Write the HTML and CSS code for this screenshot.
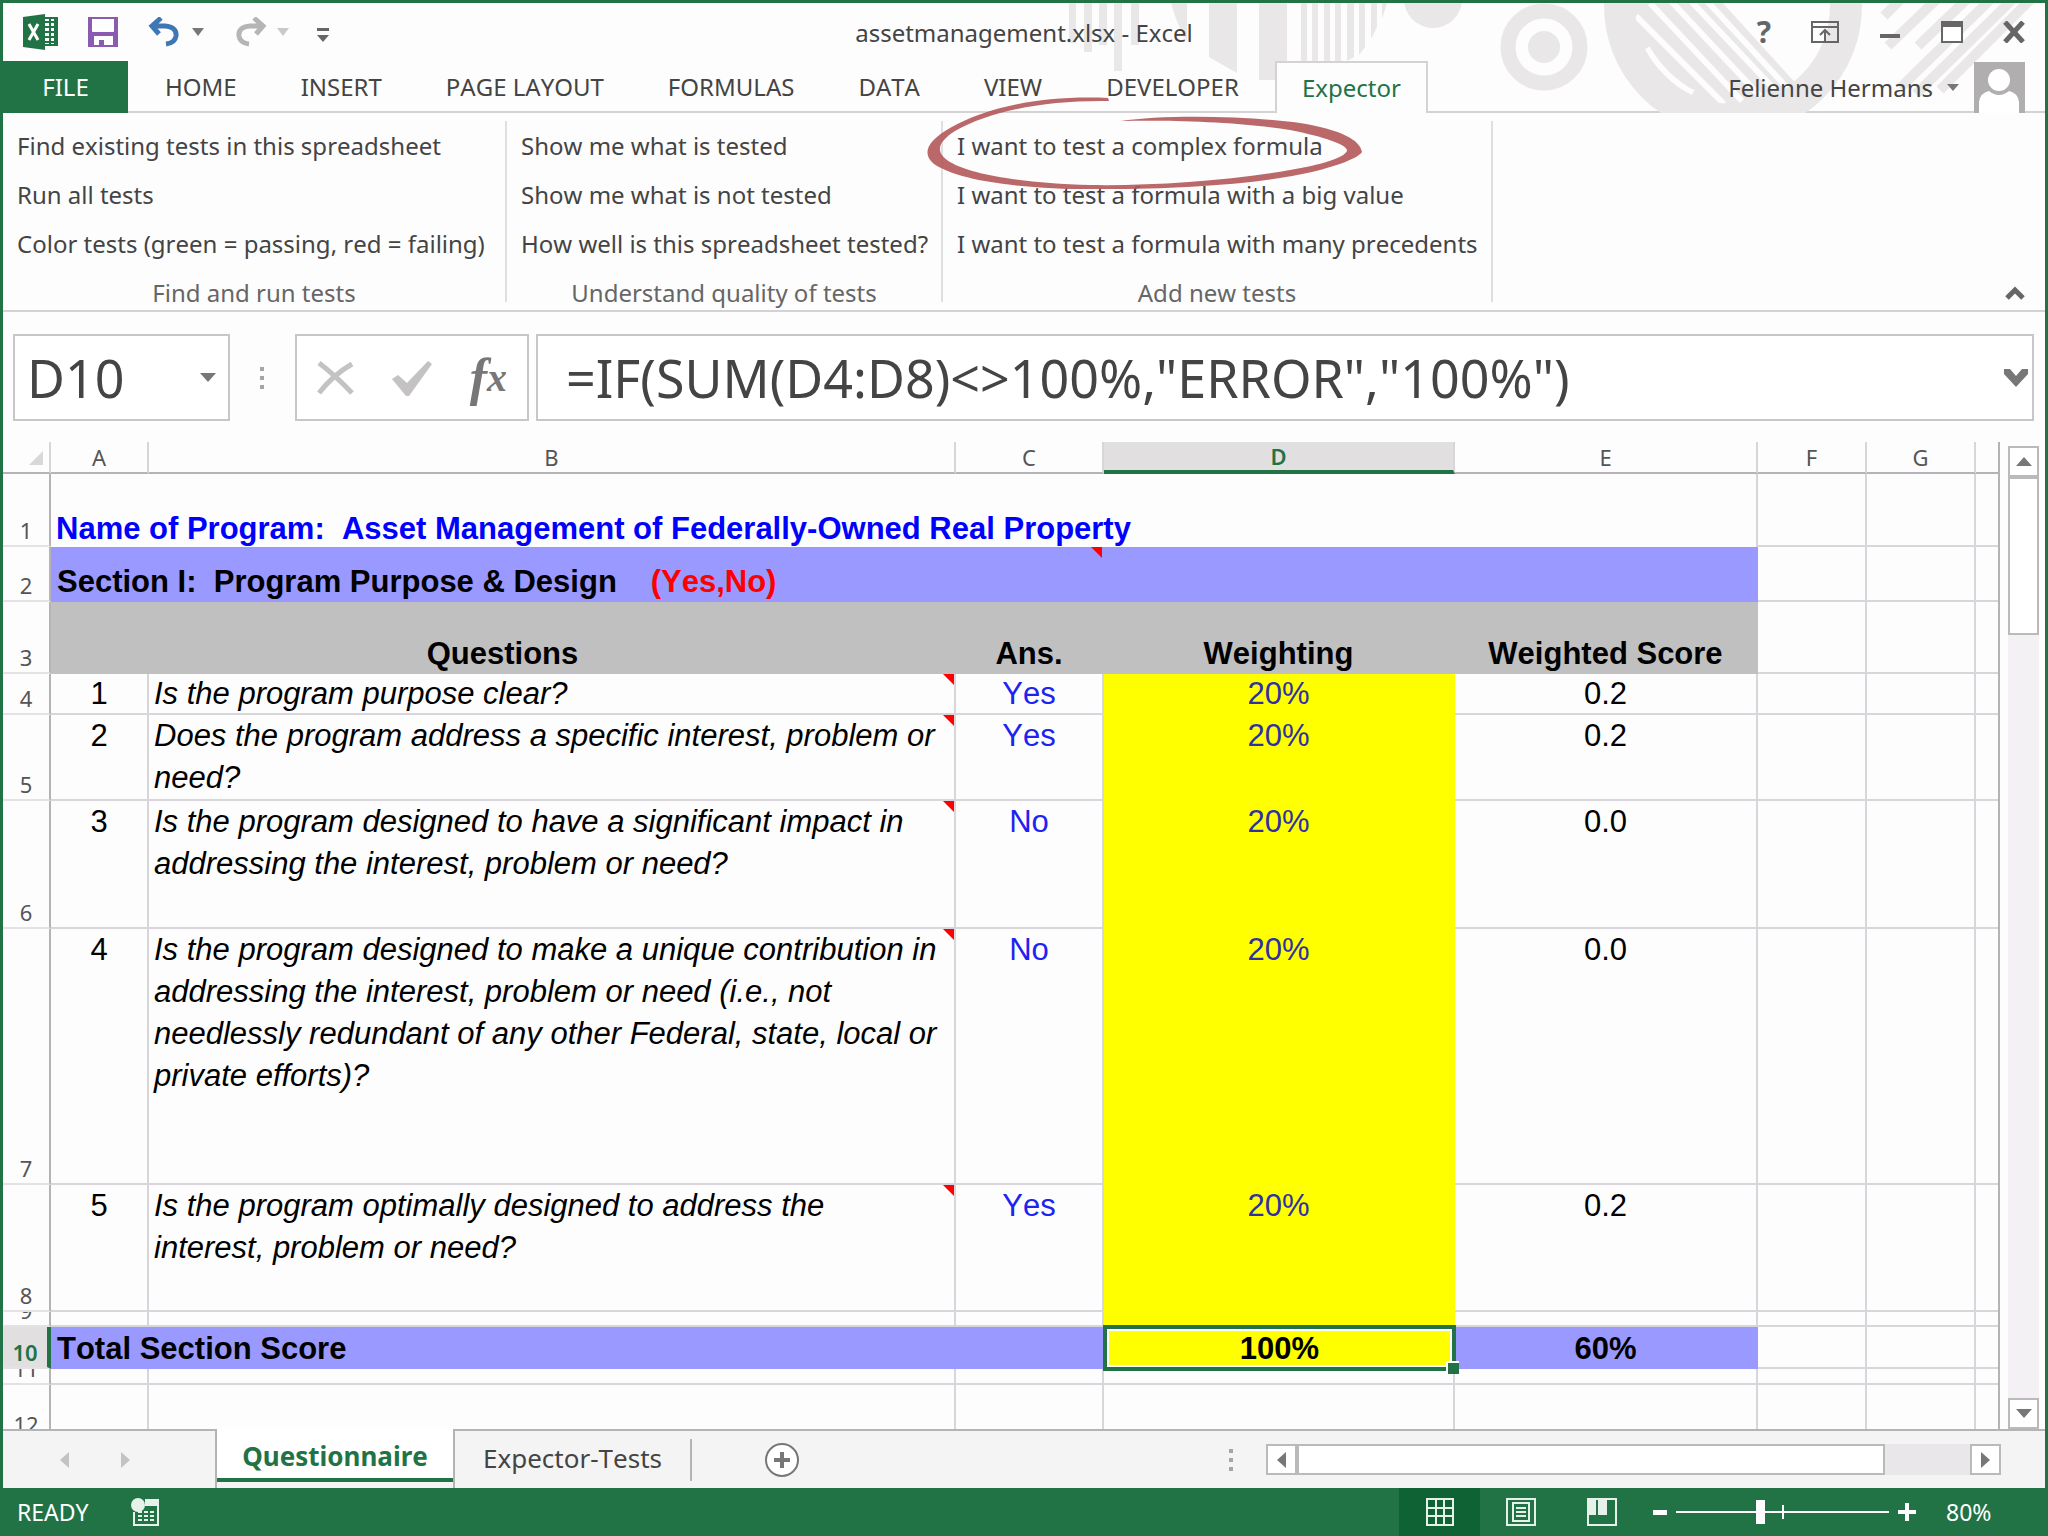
FILE: index.html
```html
<!DOCTYPE html>
<html lang="en">
<head>
    <meta charset="UTF-8">
    <meta name="viewport" content="width=device-width, initial-scale=1.0">
    <title>assetmanagement.xlsx - Excel</title>
    <link rel="stylesheet" href="styles.css">
</head>
<body>

    <div class="window">
        <header class="top">
            <svg class="pattern" width="980" height="110" viewBox="1065 3 980 110" aria-hidden="true">
                <g fill="#e9e7e8">
                    <path d="M1069 3h7v40h-7zM1084 3h8v49h-8zM1099 3h8v42h-8zM1114 3h8v68h-8zM1131 3h8v42h-8z"/>
                    <path d="M1171 3h16v38q-10-16-16-38zM1209 3h28v70l-28-16zM1259 3h28v77h-28z"/>
                    <path d="M1301 3h6v58h-6zM1312 3h6v58h-6zM1324 3h6v58h-6zM1335 3h6v58h-6zM1347 3h7v54l-7 4zM1359 3h6v44l-6 8zM1371 3h6v24l-6 12zM1382 3h5l-5 16z"/>
                    <circle cx="1433" cy="-1" r="29"/>
                    <circle cx="1544" cy="47" r="16"/>
                </g>
                <g fill="none" stroke="#e9e7e8">
                    <circle cx="1544" cy="47" r="36" stroke-width="15"/>
                    <circle cx="1733" cy="6" r="113" stroke-width="32"/>
                </g>
                <clipPath id="disc"><circle cx="1733" cy="6" r="98"/></clipPath>
                <g clip-path="url(#disc)">
                    <path d="M1600 0h120l100 110h-220z" fill="#e9e7e8"/>
                    <path d="M1647 48q18 30 46 45M1636 16l88 88M1650 3l92 98M1670 0l90 96M1690 0l85 90M1706 0l85 92" fill="none" stroke="#fdfdfd" stroke-width="6"/>
                </g>
                <g stroke="#e9e7e8" stroke-width="10">
                    <path d="M1884 16l18-18M1888 46l50-48M1918 46l50-48M1900 88l94-92M1916 94l100-98M1940 90l94-94"/>
                </g>
            </svg>

            <div class="title-bar">
                <div class="quick-access">
                    <svg width="36" height="36" viewBox="0 0 36 36" aria-hidden="true">
                        <path d="M20 4h14v27H20z" fill="#fff" stroke="#217346" stroke-width="2"/>
                        <path d="M22 8h10M22 13h10M22 18h10M22 23h10M22 28h10M27 5v25M32 5v25" stroke="#217346" stroke-width="2"/>
                        <path d="M0 3l22-3v36L0 33z" fill="#217346"/>
                        <path d="M6 10l9 16M15 10L6 26" stroke="#fff" stroke-width="3"/>
                    </svg>
                    <button class="icon-btn save" aria-label="Save">
                        <svg width="30" height="30" viewBox="0 0 30 30">
                            <path d="M0 0h30v30H0z" fill="#8a5bb0"/>
                            <path d="M4 2h22v12q0 1-1 1H5q-1 0-1-1zM6 19h19v9h-9v-5h-5v5H6z" fill="#fff"/>
                        </svg>
                    </button>
                    <button class="icon-btn undo" aria-label="Undo">
                        <svg width="32" height="30" viewBox="0 0 32 30">
                            <path d="M4 9h13q12 1 11 10q-1 7-10 8M13 1L4 9l7 8" fill="none" stroke="#3f77b5" stroke-width="5"/>
                        </svg>
                    </button>
                    <button class="icon-btn" aria-label="Undo list">
                        <svg width="12" height="8" viewBox="0 0 12 8"><path d="M0 0h12L6 8z" fill="#777"/></svg>
                    </button>
                    <button class="icon-btn redo" aria-label="Redo">
                        <svg width="32" height="30" viewBox="0 0 32 30">
                            <path d="M28 9H15Q3 10 4 19q1 7 10 8M19 1l9 8l-7 8" fill="none" stroke="#b5b5b5" stroke-width="5"/>
                        </svg>
                    </button>
                    <button class="icon-btn" aria-label="Redo list">
                        <svg width="12" height="8" viewBox="0 0 12 8"><path d="M0 0h12L6 8z" fill="#c9c9c9"/></svg>
                    </button>
                    <button class="icon-btn customize" aria-label="Customize toolbar">
                        <svg width="12" height="14" viewBox="0 0 12 14"><path d="M0 0h12v3H0zM0 7h12l-6 7z" fill="#666"/></svg>
                    </button>
                </div>
                <h1 class="title">assetmanagement.xlsx - Excel</h1>
                <div class="window-buttons">
                    <button class="icon-btn help" aria-label="Help">?</button>
                    <button class="icon-btn" aria-label="Ribbon display options">
                        <svg width="28" height="22" viewBox="0 0 28 22"><path d="M1 1h26v20H1zM1 6h26M14 20V9M9 14l5-5l5 5" fill="none" stroke="#666" stroke-width="2"/></svg>
                    </button>
                    <button class="icon-btn" aria-label="Minimize">
                        <svg width="22" height="22" viewBox="0 0 22 22"><path d="M1 13h20v4H1z" fill="#666"/></svg>
                    </button>
                    <button class="icon-btn" aria-label="Maximize">
                        <svg width="22" height="22" viewBox="0 0 22 22"><path d="M1 1h20v20H1z" fill="#fff" stroke="#666" stroke-width="2"/><path d="M0 0h22v6H0z" fill="#666"/></svg>
                    </button>
                    <button class="icon-btn" aria-label="Close">
                        <svg width="22" height="22" viewBox="0 0 22 22"><path d="M2 1l18 20M20 1L2 21" stroke="#666" stroke-width="5"/></svg>
                    </button>
                </div>
            </div>

            <nav class="tabs">
                <button class="tab tab-file">FILE</button>
                <button class="tab">HOME</button>
                <button class="tab">INSERT</button>
                <button class="tab">PAGE LAYOUT</button>
                <button class="tab">FORMULAS</button>
                <button class="tab">DATA</button>
                <button class="tab">VIEW</button>
                <button class="tab">DEVELOPER</button>
                <button class="tab active">Expector</button>
                <button class="user">
                    <span>Felienne Hermans</span>
                    <svg class="user-caret" width="12" height="7" viewBox="0 0 12 7"><path d="M0 0h12L6 7z" fill="#777"/></svg>
                    <svg width="51" height="51" viewBox="0 0 51 51">
                        <path d="M0 0h51v51H0z" fill="#b0aeaf"/>
                        <circle cx="25" cy="18" r="11" fill="#fff"/>
                        <path d="M5 51V40q1-9 10-11q10 8 20 0q9 2 10 11v11z" fill="#fff"/>
                    </svg>
                </button>
            </nav>
        </header>

        <section class="ribbon">
            <div class="group">
                <button class="command">Find existing tests in this spreadsheet</button>
                <button class="command">Run all tests</button>
                <button class="command">Color tests (green = passing, red = failing)</button>
                <div class="group-label">Find and run tests</div>
            </div>
            <div class="group">
                <button class="command">Show me what is tested</button>
                <button class="command">Show me what is not tested</button>
                <button class="command">How well is this spreadsheet tested?</button>
                <div class="group-label">Understand quality of tests</div>
            </div>
            <div class="group">
                <button class="command marked">I want to test a complex formula
                    <svg class="marker" width="440" height="94" viewBox="925 96 440 94" aria-hidden="true">
                        <path fill="#b4585a" fill-opacity=".9" d="M1108 98C1040 95 985 108 950 128C926 142 922 154 934 164C960 182 1030 190 1105 189C1180 189 1260 184 1312 172C1340 165 1358 158 1362 152C1360 140 1342 130 1300 123C1240 115 1160 115 1121 121C1160 120 1235 121 1290 130C1325 137 1348 145 1347 151C1344 158 1320 165 1290 170C1230 181 1150 186 1090 185C1020 183 970 174 950 162C934 152 938 142 955 131C990 111 1045 100 1109 101Z"/>
                    </svg>
                </button>
                <button class="command">I want to test a formula with a big value</button>
                <button class="command">I want to test a formula with many precedents</button>
                <div class="group-label">Add new tests</div>
            </div>
            <button class="icon-btn collapse" aria-label="Collapse the ribbon">
                <svg width="20" height="14" viewBox="0 0 20 14"><path d="M2 12l8-8l8 8" fill="none" stroke="#666" stroke-width="5"/></svg>
            </button>
        </section>

        <section class="formula-bar">
            <div class="box name-box">
                <input type="text" value="D10" aria-label="Name box">
                <svg width="16" height="9" viewBox="0 0 16 9"><path d="M0 0h16L8 9z" fill="#777"/></svg>
            </div>
            <svg class="grip" width="4" height="22" viewBox="0 0 4 22"><path d="M0 0h4v4H0zM0 9h4v4H0zM0 18h4v4H0z" fill="#a5a5a5"/></svg>
            <div class="box formula-buttons">
                <button class="icon-btn" aria-label="Cancel">
                    <svg width="38" height="36" viewBox="0 0 38 36"><path d="M2 3q16 12 33 30M35 4Q16 15 2 33" fill="none" stroke="#c4c2c3" stroke-width="5"/></svg>
                </button>
                <button class="icon-btn" aria-label="Enter">
                    <svg width="40" height="36" viewBox="0 0 40 36"><path d="M0 19l6-4l9 8L36 1l4 3L17 36h-3z" fill="#c4c2c3"/></svg>
                </button>
                <button class="icon-btn fx" aria-label="Insert function">f<span>x</span></button>
            </div>
            <div class="box formula">
                <input type="text" value='=IF(SUM(D4:D8)&lt;&gt;100%,"ERROR","100%")' aria-label="Formula">
                <svg width="24" height="18" viewBox="0 0 24 18"><path d="M0 0h6l6 7l6-7h6v5L12 18L0 5z" fill="#777"/></svg>
            </div>
        </section>

        <main class="workspace">
            <div class="sheet">
                <table>
                    <colgroup>
                        <col class="c-head"><col class="c-a"><col class="c-b"><col class="c-c"><col class="c-d"><col class="c-e"><col class="c-f"><col class="c-f"><col>
                    </colgroup>
                    <thead>
                        <tr>
                            <th class="corner"><svg width="14" height="14" viewBox="0 0 14 14"><path d="M14 0v14H0z" fill="#d9d7d8"/></svg></th>
                            <th>A</th><th>B</th><th>C</th><th class="current">D</th><th>E</th><th>F</th><th>G</th><th></th>
                        </tr>
                    </thead>
                    <tbody>
                        <tr class="r1">
                            <th>1</th>
                            <td colspan="5" class="program">Name of Program:&nbsp; Asset Management of Federally-Owned Real Property</td>
                            <td></td><td></td><td></td>
                        </tr>
                        <tr class="r2 band">
                            <th>2</th>
                            <td colspan="3" class="fill note">Section I:&nbsp; Program Purpose &amp; Design&nbsp;&nbsp; <span class="hint">(Yes,No)</span></td>
                            <td class="fill"></td><td class="fill"></td>
                            <td></td><td></td><td></td>
                        </tr>
                        <tr class="r3 heading">
                            <th>3</th>
                            <td colspan="2" class="fill">Questions</td><td class="fill">Ans.</td><td class="fill">Weighting</td><td class="fill">Weighted Score</td>
                            <td></td><td></td><td></td>
                        </tr>
                        <tr class="r4 item">
                            <th>4</th>
                            <td>1</td><td class="question note">Is the program purpose clear?</td><td class="answer">Yes</td><td class="weight">20%</td><td>0.2</td>
                            <td></td><td></td><td></td>
                        </tr>
                        <tr class="r5 item">
                            <th>5</th>
                            <td>2</td><td class="question note">Does the program address a specific interest, problem or need?</td><td class="answer">Yes</td><td class="weight">20%</td><td>0.2</td>
                            <td></td><td></td><td></td>
                        </tr>
                        <tr class="r6 item">
                            <th>6</th>
                            <td>3</td><td class="question note">Is the program designed to have a significant impact in addressing the interest, problem or need?</td><td class="answer">No</td><td class="weight">20%</td><td>0.0</td>
                            <td></td><td></td><td></td>
                        </tr>
                        <tr class="r7 item">
                            <th>7</th>
                            <td>4</td><td class="question note">Is the program designed to make a unique contribution in addressing the interest, problem or need (i.e., not needlessly redundant of any other Federal, state, local or private efforts)?</td><td class="answer">No</td><td class="weight">20%</td><td>0.0</td>
                            <td></td><td></td><td></td>
                        </tr>
                        <tr class="r8 item">
                            <th>8</th>
                            <td>5</td><td class="question note">Is the program optimally designed to address the<br>interest, problem or need?</td><td class="answer">Yes</td><td class="weight">20%</td><td>0.2</td>
                            <td></td><td></td><td></td>
                        </tr>
                        <tr class="r9 thin">
                            <th><div>9</div></th>
                            <td></td><td></td><td></td><td class="weight"></td><td></td>
                            <td></td><td></td><td></td>
                        </tr>
                        <tr class="r10 band">
                            <th class="current">10</th>
                            <td colspan="3" class="fill">Total Section Score</td>
                            <td class="selected"><div class="cursor">100%<span class="handle"></span></div></td>
                            <td class="fill total">60%</td>
                            <td></td><td></td><td></td>
                        </tr>
                        <tr class="r11 thin">
                            <th><div>11</div></th>
                            <td></td><td></td><td></td><td></td><td></td>
                            <td></td><td></td><td></td>
                        </tr>
                        <tr class="r12">
                            <th>12</th>
                            <td></td><td></td><td></td><td></td><td></td>
                            <td></td><td></td><td></td>
                        </tr>
                    </tbody>
                </table>
            </div>
            <div class="scroll-y">
                <button class="scroll-btn" aria-label="Scroll up"><svg width="16" height="9" viewBox="0 0 16 9"><path d="M0 9h16L8 0z" fill="#777"/></svg></button>
                <div class="thumb"></div>
                <button class="scroll-btn" aria-label="Scroll down"><svg width="16" height="9" viewBox="0 0 16 9"><path d="M0 0h16L8 9z" fill="#777"/></svg></button>
            </div>
        </main>

        <section class="sheet-bar">
            <div class="sheet-nav">
                <button class="icon-btn" aria-label="Previous sheet"><svg width="9" height="16" viewBox="0 0 9 16"><path d="M9 0v16L0 8z" fill="#c4c2c3"/></svg></button>
                <button class="icon-btn" aria-label="Next sheet"><svg width="9" height="16" viewBox="0 0 9 16"><path d="M0 0v16l9-8z" fill="#c4c2c3"/></svg></button>
            </div>
            <button class="sheet-tab active">Questionnaire</button>
            <div class="sheet-rest">
                <button class="sheet-tab">Expector-Tests</button>
                <button class="icon-btn new-sheet" aria-label="New sheet">
                    <svg width="36" height="36" viewBox="0 0 36 36"><circle cx="18" cy="18" r="16" fill="#fff" stroke="#777" stroke-width="2"/><path d="M10 18h16M18 10v16" stroke="#777" stroke-width="4"/></svg>
                </button>
                <svg class="sheet-grip" width="4" height="22" viewBox="0 0 4 22"><path d="M0 0h4v4H0zM0 9h4v4H0zM0 18h4v4H0z" fill="#a5a5a5"/></svg>
                <div class="scroll-x">
                    <button class="scroll-btn" aria-label="Scroll left"><svg width="9" height="16" viewBox="0 0 9 16"><path d="M9 0v16L0 8z" fill="#777"/></svg></button>
                    <div class="thumb"></div>
                    <button class="scroll-btn" aria-label="Scroll right"><svg width="9" height="16" viewBox="0 0 9 16"><path d="M0 0v16l9-8z" fill="#777"/></svg></button>
                </div>
            </div>
        </section>

        <footer class="status-bar">
            <span>READY</span>
            <svg class="macro" width="28" height="28" viewBox="0 0 28 28" aria-hidden="true">
                <path d="M15 2h12v25H3V14" fill="none" stroke="#e6f1ea" stroke-width="2"/>
                <path d="M14 1h13v7H14z" fill="#e6f1ea"/>
                <circle cx="7" cy="7" r="7" fill="#e6f1ea"/>
                <path d="M7 14h4M13 14h4M19 14h4M7 18h4M13 18h4M19 18h4M7 22h4M13 22h4M19 22h4" stroke="#e6f1ea" stroke-width="2"/>
            </svg>
            <div class="views">
                <button class="view active" aria-label="Normal view">
                    <svg width="28" height="28" viewBox="0 0 28 28"><path d="M1 1h26v26H1zM1 10h26M1 18h26M10 1v26M18 1v26" fill="none" stroke="#e6f1ea" stroke-width="2"/></svg>
                </button>
                <button class="view" aria-label="Page layout view">
                    <svg width="30" height="28" viewBox="0 0 30 28"><path d="M1 1h28v26H1zM7 5h16v18H7zM10 10h10M10 14h10M10 18h10" fill="none" stroke="#e6f1ea" stroke-width="2"/></svg>
                </button>
                <button class="view" aria-label="Page break preview">
                    <svg width="30" height="28" viewBox="0 0 30 28"><path d="M1 1h28v26H1z" fill="none" stroke="#e6f1ea" stroke-width="2"/><path d="M1 1h8v16H1zM11 1h9v16h-9z" fill="#e6f1ea"/></svg>
                </button>
            </div>
            <div class="zoom">
                <button class="icon-btn" aria-label="Zoom out"><svg width="14" height="18" viewBox="0 0 14 18"><path d="M0 7h14v5H0z" fill="#fff"/></svg></button>
                <input type="range" min="0" max="100" value="39" aria-label="Zoom">
                <button class="icon-btn" aria-label="Zoom in"><svg width="18" height="18" viewBox="0 0 18 18"><path d="M0 9h18M9 0v18" stroke="#fff" stroke-width="4"/></svg></button>
                <span class="percent">80%</span>
            </div>
        </footer>
    </div>

</body>
</html>
```

FILE: styles.css
```css
* {
    box-sizing: border-box;
}

body {
    margin: 0;
    font-family: 'Noto Sans', 'Open Sans', sans-serif;
    font-size: 24px;
    font-kerning: none;
    color: #444;
}

button, input {
    font: inherit;
    font-kerning: none;
    color: inherit;
    background: none;
    border: none;
    padding: 0;
    margin: 0;
    border-radius: 0;
}

svg {
    display: block;
}

.window {
    display: flex;
    flex-direction: column;
    height: 100vh;
    border: 3px solid #217346;
    border-bottom: none;
    background-color: #fdfdfd;
}

.icon-btn {
    display: flex;
    align-items: center;
    justify-content: center;
}

/* title bar and tabs */
.top {
    position: relative;
    border-bottom: 2px solid #d5d2d4;
}

.pattern {
    position: absolute;
    top: 0;
    right: 0;
}

.title-bar {
    position: relative;
    display: grid;
    grid-template-columns: 1fr auto 1fr;
    align-items: center;
    height: 58px;
}

.quick-access {
    display: flex;
    align-items: center;
    padding-left: 20px;
}

.save {
    margin-left: 29px;
}

.undo {
    margin: 0 12px 0 30px;
}

.redo {
    margin: 0 10px 0 31px;
}

.customize {
    margin: 6px 0 0 28px;
}

.title {
    margin: 0;
    font-size: 24px;
    font-weight: 400;
}

.window-buttons {
    display: flex;
    justify-content: flex-end;
    align-items: center;
    gap: 40px;
    padding-right: 20px;
}

.help {
    font-size: 30px;
    font-weight: 700;
    line-height: 30px;
    color: #666;
}

.tabs {
    position: relative;
    display: flex;
    height: 52px;
    margin-bottom: -2px;
}

.tab {
    padding: 0 32px;
    line-height: 50px;
}

.tab-file {
    width: 125px;
    margin-right: 5px;
    background-color: #217346;
    color: #fff;
}

.tab.active {
    padding: 0 25px;
    margin-left: 4px;
    border: 2px solid #d5d2d4;
    border-bottom: none;
    background-color: #fdfdfd;
    color: #217346;
}

.user {
    display: flex;
    align-items: center;
    margin-left: auto;
    padding-right: 20px;
}

.user-caret {
    margin: 0 15px 0 14px;
}

/* ribbon */
.ribbon {
    display: grid;
    grid-template-columns: 504px 436px 550px 1fr;
    padding: 8px 0;
    border-bottom: 2px solid #d5d2d4;
}

.group {
    display: flex;
    flex-direction: column;
    align-items: flex-start;
    padding-left: 14px;
    border-right: 2px solid #e0dee0;
}

.command {
    height: 49px;
    line-height: 49px;
    white-space: nowrap;
}

.group-label {
    align-self: stretch;
    margin-left: -14px;
    height: 34px;
    line-height: 49px;
    text-align: center;
    color: #666;
}

.marked {
    position: relative;
}

.marker {
    position: absolute;
    left: -32px;
    top: -25px;
    z-index: 1;
}

.collapse {
    align-self: end;
    justify-self: end;
    margin: 0 20px 2px 0;
}

/* formula bar */
.formula-bar {
    display: flex;
    align-items: center;
    padding: 22px 11px 21px 10px;
}

.box {
    display: flex;
    align-items: center;
    height: 87px;
    border: 2px solid #c8c6c8;
    background-color: #fff;
}

.box input {
    min-width: 0;
    flex: 1;
    font-size: 52px;
}

.name-box {
    width: 217px;
    padding: 0 12px;
}

.grip {
    margin: 0 31px 0 30px;
}

.formula-buttons {
    width: 234px;
    justify-content: space-between;
    padding: 0 20px;
    margin-right: 7px;
}

.fx {
    font-family: 'Liberation Serif', serif;
    font-style: italic;
    font-size: 52px;
    font-weight: 700;
    line-height: 60px;
    color: #777;
}

.fx span {
    font-size: 40px;
}

.formula {
    flex: 1;
    padding: 0 4px 0 28px;
}

/* worksheet */
.workspace {
    display: flex;
    flex: 1;
    min-height: 0;
}

.sheet {
    flex: 1;
    overflow: hidden;
}

table {
    width: 100%;
    table-layout: fixed;
    border-collapse: separate;
    border-spacing: 0;
    font-family: 'Liberation Sans', Arial, sans-serif;
    font-size: 31px;
    color: #000;
    border-right: 2px solid #b5b3b5;
}

.c-head { width: 48px; }
.c-a { width: 98px; }
.c-b { width: 807px; }
.c-c { width: 148px; }
.c-d { width: 351px; }
.c-e { width: 303px; }
.c-f { width: 109px; }

th, td {
    padding: 0;
    vertical-align: bottom;
    border-right: 2px solid #d8d6da;
    border-bottom: 2px solid #d8d6da;
}

th {
    font-family: 'Noto Sans', 'Open Sans', sans-serif;
    font-size: 22px;
    font-weight: 400;
    line-height: 30px;
    color: #555;
}

tr > :last-child {
    border-right: none;
}

thead th {
    height: 32px;
    border-bottom-color: #b5b3b5;
}

thead .current {
    background-color: #e1dfe0;
    border-bottom: 4px solid #217346;
    line-height: 28px;
    font-weight: 600;
    color: #217346;
}

.corner svg {
    margin: 0 0 7px 26px;
}

tbody th {
    border-right-color: #b5b3b5;
    border-bottom-color: #e4e2e4;
}

tbody th.current {
    background-color: #e1dfe0;
    border-right: 4px solid #217346;
    font-weight: 600;
    color: #217346;
}

.r1 { height: 73px; }
.r2 { height: 55px; }
.r3 { height: 72px; }
.r4 { height: 41px; }
.r5 { height: 86px; }
.r6 { height: 128px; }
.r7 { height: 256px; }
.r8 { height: 127px; }
.r9 { height: 15px; }
.r10 { height: 42px; }
.r11 { height: 16px; }
.r12 { height: 56px; }

.program {
    padding-left: 5px;
    border-bottom: none;
    font-weight: 700;
    color: #00f;
}

.band .fill {
    padding-left: 6px;
    background-color: #9999ff;
    border-color: #9999ff;
    font-weight: 700;
}

.band .total {
    padding: 0;
    text-align: center;
}

.hint {
    margin-left: 8px;
    color: #f00;
}

.heading .fill {
    background-color: #c0c0c0;
    border-color: #c0c0c0;
    font-weight: 700;
    text-align: center;
}

.item td {
    vertical-align: top;
    text-align: center;
    line-height: 42px;
}

.r4 td {
    line-height: 39px;
}

.item .question {
    padding-left: 5px;
    font-style: italic;
    text-align: left;
}

.item .answer {
    color: #2222f0;
}

td.weight {
    background-color: #ff0;
    border-color: #ff0;
    color: #2f2fa8;
}

/* red comment corner */
.note {
    position: relative;
}

.note::after {
    content: '';
    position: absolute;
    top: 0;
    right: 0;
    border-top: 11px solid #f00;
    border-left: 11px solid transparent;
}

.thin th div {
    display: flex;
    flex-direction: column;
    justify-content: flex-end;
    align-items: center;
    height: 13px;
    overflow: hidden;
}

.r11 th div {
    height: 14px;
}

td.selected {
    position: relative;
    border: none;
}

.cursor {
    position: absolute;
    inset: -2px -1px;
    border: 4px solid #217346;
    box-shadow: inset 0 0 0 2px #fff;
    background-color: #ff0;
    font-weight: 700;
    line-height: 39px;
    text-align: center;
}

.handle {
    position: absolute;
    right: -7px;
    bottom: -7px;
    width: 13px;
    height: 13px;
    border: 2px solid #fff;
    border-right: none;
    border-bottom: none;
    background-color: #217346;
}

/* scroll bars */
.scroll-y {
    display: flex;
    flex-direction: column;
    width: 31px;
    margin: 4px 6px 0 8px;
    background-color: #f3f1f3;
}

.scroll-btn {
    display: flex;
    align-items: center;
    justify-content: center;
    width: 31px;
    height: 31px;
    flex: none;
    border: 2px solid #bbb9bb;
    background-color: #fff;
}

.thumb {
    border: 2px solid #bbb9bb;
    background-color: #fff;
}

.scroll-y .thumb {
    height: 158px;
    margin-bottom: auto;
}

/* sheet tabs */
.sheet-bar {
    display: flex;
    height: 59px;
    background-color: #f5f4f5;
}

.sheet-nav {
    display: flex;
    align-items: center;
    gap: 52px;
    width: 214px;
    padding-left: 57px;
    border-top: 2px solid #b5b3b5;
    border-right: 2px solid #b5b3b5;
}

.sheet-tab {
    height: 42px;
    padding: 0 28px 4px;
    border-right: 2px solid #b5b3b5;
    font-size: 26px;
    line-height: 36px;
}

.sheet-tab.active {
    width: 236px;
    height: 53px;
    padding: 4px 0 0;
    border-right: none;
    border-bottom: 4px solid #217346;
    background-color: #fff;
    font-weight: 700;
    color: #217346;
}

.sheet-rest {
    display: flex;
    flex: 1;
    align-items: center;
    border-top: 2px solid #b5b3b5;
    border-left: 2px solid #b5b3b5;
}

.new-sheet {
    margin-left: 72px;
}

.sheet-grip {
    margin-left: auto;
}

.scroll-x {
    display: flex;
    width: 735px;
    margin: 0 44px 0 33px;
    background-color: #e9e7e9;
}

.scroll-x .thumb {
    width: 588px;
    margin-right: auto;
}

/* status bar */
.status-bar {
    display: flex;
    align-items: center;
    height: 48px;
    padding-left: 14px;
    background-color: #217346;
    font-size: 23px;
    line-height: 44px;
    color: #fff;
}

.macro {
    margin-left: 42px;
}

.views {
    display: flex;
    align-self: stretch;
    margin-left: auto;
}

.view {
    display: flex;
    align-items: center;
    justify-content: center;
    width: 81px;
}

.view.active {
    background-color: #0e6233;
}

.zoom {
    display: flex;
    align-items: center;
    padding-left: 11px;
    width: 403px;
}

.zoom input {
    appearance: none;
    width: 213px;
    height: 24px;
    margin: 0 9px;
    background:
        linear-gradient(#fff, #fff) center / 2px 14px no-repeat,
        linear-gradient(#fff, #fff) center / 100% 2px no-repeat;
}

.zoom input::-webkit-slider-thumb {
    appearance: none;
    width: 9px;
    height: 24px;
    background-color: #fff;
}

.percent {
    margin-left: 30px;
}
```
